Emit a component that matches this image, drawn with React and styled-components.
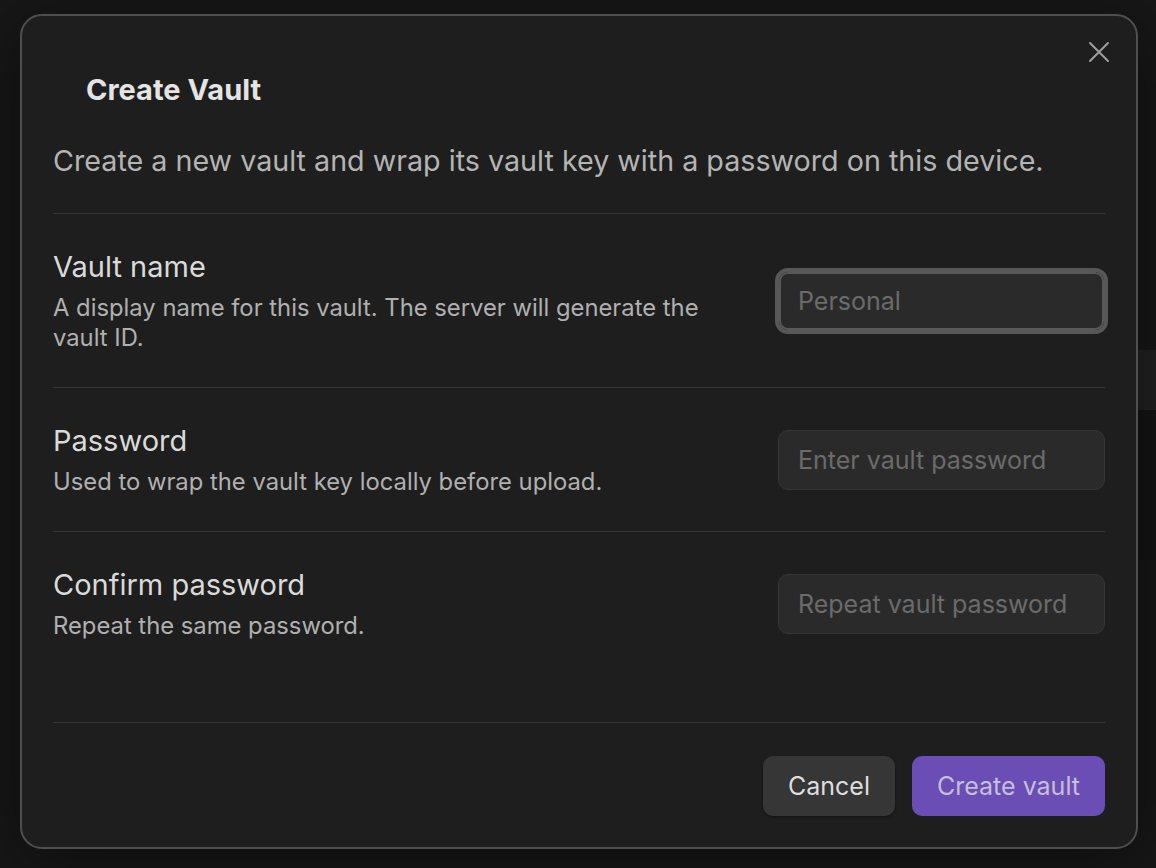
import React from "react";
import styled, { createGlobalStyle } from "styled-components";

const GlobalStyle = createGlobalStyle`
  * {
    box-sizing: border-box;
  }
  body {
    margin: 0;
    background-color: #171717;
    /* faint strip of the workspace showing behind the dim layer */
    background-image: linear-gradient(
      to bottom,
      transparent 350px,
      #212121 350px,
      #212121 410px,
      #141414 410px,
      #141414 560px,
      transparent 560px
    );
    background-size: 18px 100%;
    background-position: right top;
    background-repeat: no-repeat;
    font-family: Inter, "Noto Sans", sans-serif;
    -webkit-font-smoothing: antialiased;
  }
`;

const Backdrop = styled.div`
  min-height: 100vh;
  padding: 14px 18px 18px 20px;
`;

const Modal = styled.div`
  position: relative;
  width: 1118px;
  background: #1e1e1e;
  border: 2px solid #4f4f4f;
  border-radius: 22px;
  box-shadow: 0 12px 70px rgba(0, 0, 0, 0.45);
  padding: 57px 31px 31px 31px;
`;

const CloseButton = styled.button`
  position: absolute;
  top: 16px;
  right: 17px;
  width: 40px;
  height: 40px;
  display: flex;
  align-items: center;
  justify-content: center;
  background: transparent;
  border: none;
  padding: 0;
  cursor: pointer;
  color: #9f9f9f;
`;

const Title = styled.h2`
  margin: 0 0 35px 33px;
  font-size: 29px;
  line-height: 34px;
  font-weight: 700;
  color: #e4e4e4;
`;

const Intro = styled.p`
  margin: 0 0 34px 0;
  font-size: 28.7px;
  line-height: 37px;
  color: #b4b4b4;
`;

const Row = styled.div`
  display: flex;
  align-items: center;
  gap: 24px;
  border-top: 1px solid #363636;
  padding: 35px 0 34px;
`;

const Info = styled.div`
  flex: 1;
  max-width: 680px;
  display: flex;
  flex-direction: column;
  gap: 8px;
`;

const Label = styled.div`
  font-size: 29px;
  line-height: 36px;
  color: #dadada;
`;

const Hint = styled.div`
  font-size: 23.8px;
  line-height: 30px;
  color: #b0b0b0;
`;

const Control = styled.div`
  margin-left: auto;
  display: flex;
  justify-content: flex-end;
`;

const Field = styled.input`
  width: 327px;
  height: 60px;
  padding: 0 19px;
  border-radius: 10px;
  border: 1px solid ${(p) => (p.$focused ? "#585858" : "#363636")};
  background: #2a2a2a;
  color: #dcdcdc;
  font-family: inherit;
  font-size: 25px;
  outline: none;
  box-shadow: ${(p) =>
    p.$focused ? "0 0 0 3px #585858, inset 0 0 0 2px #585858" : "none"};
  &::placeholder {
    color: #6b6b6b;
  }
`;

const Footer = styled.div`
  margin-top: 47px;
  border-top: 1px solid #363636;
  padding-top: 33px;
  display: flex;
  justify-content: flex-end;
  gap: 17px;
`;

const Button = styled.button`
  height: 60px;
  padding: 0 25px;
  border: none;
  border-radius: 10px;
  font-family: inherit;
  font-size: 25px;
  cursor: pointer;
  background: ${(p) => (p.$primary ? "#6a4db5" : "#363636")};
  color: ${(p) => (p.$primary ? "#c6bfd8" : "#dedede")};
  box-shadow: ${(p) =>
    p.$primary ? "none" : "0 1px 3px rgba(0, 0, 0, 0.45)"};
`;

const CloseIcon = () => (
  <svg width="22" height="22" viewBox="0 0 22 22" fill="none">
    <path
      d="M2 2 L20 20 M20 2 L2 20"
      stroke="currentColor"
      strokeWidth="2"
      strokeLinecap="round"
    />
  </svg>
);

const fields = [
  {
    label: "Vault name",
    hint: "A display name for this vault. The server will generate the vault ID.",
    placeholder: "Personal",
    type: "text",
    focused: true,
  },
  {
    label: "Password",
    hint: "Used to wrap the vault key locally before upload.",
    placeholder: "Enter vault password",
    type: "password",
  },
  {
    label: "Confirm password",
    hint: "Repeat the same password.",
    placeholder: "Repeat vault password",
    type: "password",
  },
];

const App = () => {
  return (
    <>
      <GlobalStyle />
      <Backdrop>
        <Modal>
          <CloseButton aria-label="Close">
            <CloseIcon />
          </CloseButton>
          <Title>Create Vault</Title>
          <Intro>
            Create a new vault and wrap its vault key with a password on this
            device.
          </Intro>

          {fields.map((f) => (
            <Row key={f.label}>
              <Info>
                <Label>{f.label}</Label>
                <Hint>{f.hint}</Hint>
              </Info>
              <Control>
                <Field
                  type={f.type}
                  placeholder={f.placeholder}
                  $focused={f.focused}
                />
              </Control>
            </Row>
          ))}

          <Footer>
            <Button>Cancel</Button>
            <Button $primary>Create vault</Button>
          </Footer>
        </Modal>
      </Backdrop>
    </>
  );
};

export default App;
